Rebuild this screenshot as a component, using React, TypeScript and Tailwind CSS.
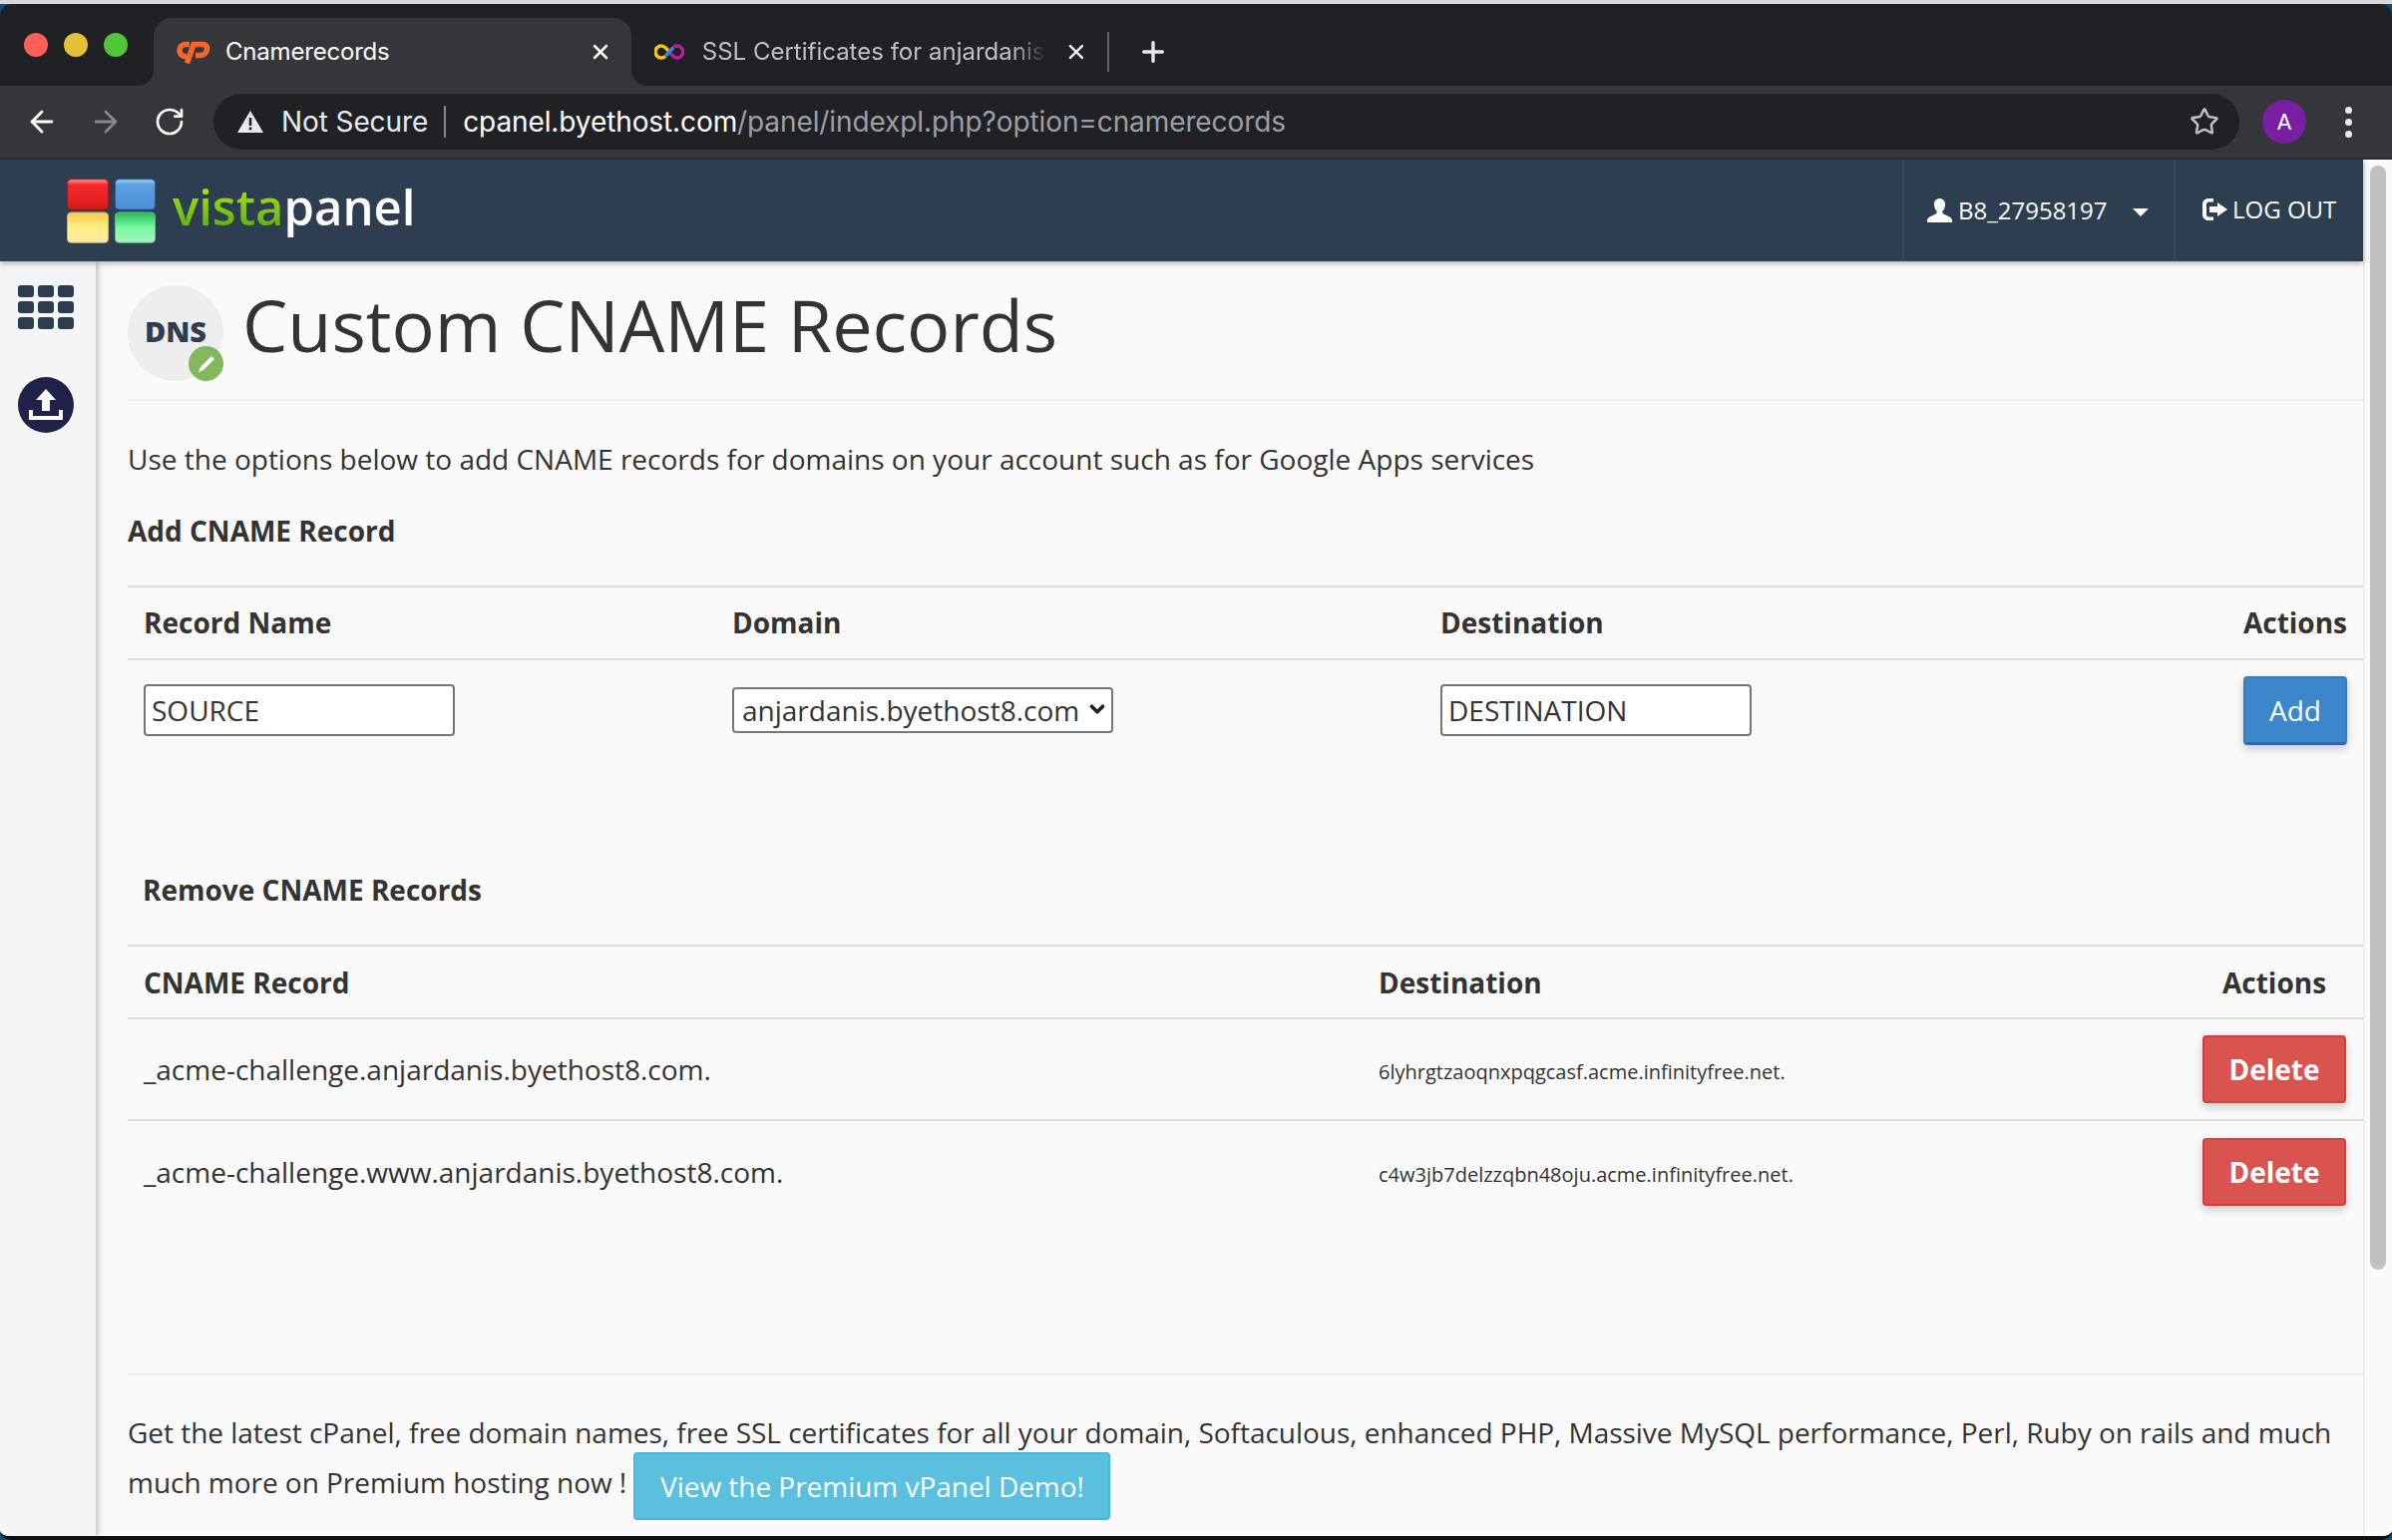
import React from 'react';
import { ArrowLeft, ArrowRight, RotateCw, Star, Plus, X, ChevronDown } from 'lucide-react';

const addColumns = 'grid grid-cols-[606px_710px_1fr_auto]';
const removeColumns = 'grid grid-cols-[1254px_1fr_auto]';

const records = [
  { name: '_acme-challenge.anjardanis.byethost8.com.', destination: '6lyhrgtzaoqnxpqgcasf.acme.infinityfree.net.' },
  { name: '_acme-challenge.www.anjardanis.byethost8.com.', destination: 'c4w3jb7delzzqbn48oju.acme.infinityfree.net.' },
];

const CpanelIcon = () => (
  <svg width="34" height="24" viewBox="0 0 34 24" fill="none" stroke="#f4662a" strokeWidth="5.5">
    <path d="M13 4.500H9C5 4.500 3 7.500 3 10.500S5 16.500 9 16.500H10" />
    <path d="M10.500 23.500L17 4.500H26C29.500 4.500 31 6.500 30.500 9.500C30 13 27.500 15.500 24 15.500H19" />
  </svg>
);

const InfinityIcon = () => (
  <svg width="30" height="20" viewBox="0 0 30 20" fill="none" strokeWidth="3.5">
    <path d="M15 10c-3-4-5-6-8-6a6 6 0 0 0 0 12c1.500 0 3-.6 4-1.500" stroke="#f5c518" />
    <path d="M15 10c3 4 5 6 8 6a6 6 0 0 0 0-12c-1.500 0-3 .6-4 1.500" stroke="#c2189b" />
    <path d="M11 14.500L19 5.500" stroke="#2b8be8" />
  </svg>
);

const WarningIcon = () => (
  <svg width="26" height="22" viewBox="0 0 26 22">
    <path d="M13 0L26 22H0Z" fill="#e8eaed" />
    <rect x="11.700" y="7" width="2.600" height="8" fill="#202124" />
    <rect x="11.700" y="16.500" width="2.600" height="2.800" fill="#202124" />
  </svg>
);

const VistaLogo = () => (
  <svg width="90" height="65" viewBox="0 0 92 66">
    <defs>
      <linearGradient id="logoRed" x1="0" y1="0" x2="0" y2="1">
        <stop offset="0" stopColor="#ff9a9a" />
        <stop offset="0.18" stopColor="#f52a2a" />
        <stop offset="1" stopColor="#d81818" />
      </linearGradient>
      <linearGradient id="logoBlue" x1="0" y1="0" x2="0" y2="1">
        <stop offset="0" stopColor="#a8d0f4" />
        <stop offset="0.18" stopColor="#5d9fe2" />
        <stop offset="1" stopColor="#4a8fd8" />
      </linearGradient>
      <linearGradient id="logoYellow" x1="0" y1="0" x2="0" y2="1">
        <stop offset="0" stopColor="#ffc850" />
        <stop offset="0.5" stopColor="#fff080" />
        <stop offset="1" stopColor="#ffe9a8" />
      </linearGradient>
      <linearGradient id="logoGreen" x1="0" y1="0" x2="0" y2="1">
        <stop offset="0" stopColor="#25b85a" />
        <stop offset="0.5" stopColor="#78fb9e" />
        <stop offset="1" stopColor="#a8f0c0" />
      </linearGradient>
    </defs>
    <rect x="0.500" y="0.500" width="42" height="31" rx="4" fill="url(#logoRed)" stroke="#b01010" />
    <rect x="49.500" y="0.500" width="41" height="31" rx="4" fill="url(#logoBlue)" stroke="#1d5fa8" />
    <rect x="0.500" y="34.500" width="42" height="31" rx="4" fill="url(#logoYellow)" stroke="#c8b070" />
    <rect x="49.500" y="34.500" width="41" height="31" rx="4" fill="url(#logoGreen)" stroke="#5fc080" />
  </svg>
);

const UserIcon = () => (
  <svg width="25" height="24" viewBox="0 0 25 24" fill="#fff">
    <path d="M12.500 0c3.500 0 5.500 2.500 5.500 6 0 3-1.200 5.500-2.800 7 0 1.500.6 2.200 2.300 3l5 2.500c1.500.8 2.500 2 2.500 3.500v2H0v-2c0-1.500 1-2.700 2.500-3.500l5-2.500c1.700-.8 2.300-1.500 2.300-3-1.600-1.500-2.800-4-2.800-7 0-3.500 2-6 5.500-6z" />
  </svg>
);

const LogoutIcon = () => (
  <svg width="25" height="22" viewBox="0 0 25 22" fill="#fff">
    <path d="M11 0v3.500H6.500C5 3.500 4 4.500 4 6v10c0 1.500 1 2.500 2.500 2.500H11V22H6C2.500 22 0 19.500 0 16V6c0-3.500 2.500-6 6-6z" />
    <path d="M15 4l10 7-10 7v-4H7V8h8z" />
  </svg>
);

const GridIcon = () => (
  <div className="grid grid-cols-[16px_16px_16px] auto-rows-[12px] gap-x-[4px] gap-y-[4px]">
    {Array.from({ length: 9 }).map((_, i) => (
      <div key={i} className="rounded-[3px] bg-[#2c3e50]" />
    ))}
  </div>
);

const UploadIcon = () => (
  <svg width="56" height="56" viewBox="0 0 56 56">
    <circle cx="28" cy="28" r="28" fill="#1e2148" />
    <path d="M28 12L38 23H32V34H24V23H18Z" fill="#fff" />
    <path d="M11 33V43H45V33H41V39H15V33Z" fill="#fff" />
  </svg>
);

const TabFlare = ({ side }: { side: 'left' | 'right' }) => (
  <div className={`absolute bottom-0 w-[16px] h-[16px] bg-[#35363a] ${side === 'left' ? 'left-[-16px]' : 'right-[-16px]'}`}>
    <div className={`w-full h-full bg-[#202124] ${side === 'left' ? 'rounded-br-[16px]' : 'rounded-bl-[16px]'}`} />
  </div>
);

const TabStrip = () => (
  <div className="h-[82px] bg-[#202124] flex items-end text-[24px] rounded-t-[12px] shrink-0" style={{ fontFamily: 'Inter, sans-serif' }}>
    <div className="w-[154px] h-[68px] flex items-start pt-[15px] pl-[24px] gap-[16px] shrink-0">
      <div className="w-[24px] h-[24px] rounded-full bg-[#ff5f57]" />
      <div className="w-[24px] h-[24px] rounded-full bg-[#e6c038]" />
      <div className="w-[24px] h-[24px] rounded-full bg-[#53c53c]" />
    </div>
    <div className="relative w-[479px] h-[68px] bg-[#35363a] rounded-t-[18px] flex items-center pl-[23px] pr-[19px] shrink-0">
      <CpanelIcon />
      <span className="ml-[15px] text-white flex-1 tracking-[-0.2px]">Cnamerecords</span>
      <X size={24} strokeWidth={2.5} className="text-white" />
      <TabFlare side="left" />
      <TabFlare side="right" />
    </div>
    <div className="w-[477px] h-[68px] flex items-center pl-[23px] pr-[19px] shrink-0">
      <InfinityIcon />
      <span className="ml-[18px] w-[348px] overflow-hidden whitespace-nowrap text-[#bdc1c6] [mask-image:linear-gradient(to_right,black_90%,transparent)]">SSL Certificates for anjardanis.</span>
      <X size={24} strokeWidth={2.5} className="ml-[18px] text-[#e8eaed]" />
    </div>
    <div className="w-[2px] h-[40px] mb-[14px] bg-[#5f6368] shrink-0" />
    <Plus size={32} strokeWidth={2.5} className="ml-[28px] mb-[18px] text-[#e8eaed]" />
  </div>
);

const Toolbar = () => (
  <div className="h-[74px] bg-[#35363a] flex items-center border-b-[2px] border-[#2a2b2e] shrink-0" style={{ fontFamily: 'Inter, sans-serif' }}>
    <ArrowLeft size={34} strokeWidth={2} className="ml-[25px] text-white shrink-0" />
    <ArrowRight size={34} strokeWidth={2} className="ml-[30px] text-[#85878a] shrink-0" />
    <RotateCw size={32} strokeWidth={2} className="ml-[31px] text-white shrink-0" />
    <div className="ml-[28px] w-[2031px] h-[56px] rounded-full bg-[#202124] flex items-center pl-[24px] pr-[20px] shrink-0">
      <WarningIcon />
      <span className="ml-[18px] text-[28px] tracking-[-0.1px] text-[#e8eaed]">Not Secure</span>
      <div className="ml-[16px] w-[2px] h-[32px] bg-[#85878a]" />
      <span className="ml-[17px] text-[28px] tracking-[-0.1px] text-white whitespace-nowrap">
        cpanel.byethost.com<span className="text-[#9aa0a6]">/panel/indexpl.php?option=cnamerecords</span>
      </span>
      <Star size={30} strokeWidth={2} className="ml-auto text-[#bdc1c6]" />
    </div>
    <div className="ml-[23px] w-[44px] h-[44px] rounded-full bg-[#7b1fa2] flex items-center justify-center text-white text-[22px] shrink-0">A</div>
    <div className="ml-[39px] flex flex-col gap-[5px] shrink-0">
      <div className="w-[7px] h-[7px] rounded-full bg-[#e8eaed]" />
      <div className="w-[7px] h-[7px] rounded-full bg-[#e8eaed]" />
      <div className="w-[7px] h-[7px] rounded-full bg-[#e8eaed]" />
    </div>
  </div>
);

const PanelHeader = () => (
  <div className="h-[102px] bg-[#2c3e50] flex items-center shadow-[0_2px_6px_rgba(0,0,0,0.3)] relative shrink-0">
    <div className="ml-[67px] pt-[1px]">
      <VistaLogo />
    </div>
    <span className="ml-[16px] text-[49px] leading-none font-semibold mb-[8px]">
      <span className="bg-gradient-to-b from-[#c4f01e] to-[#3ea60f] bg-clip-text text-transparent">vista</span>
      <span className="text-white">panel</span>
    </span>
    <div className="ml-auto h-full flex text-white text-[24px]">
      <div className="w-[272px] h-full border-l-[2px] border-[#34495e] flex items-center pl-[23px]">
        <UserIcon />
        <span className="ml-[6px]">B8_27958197</span>
        <div className="ml-[25px] mt-[4px] w-0 h-0 border-l-[8px] border-r-[8px] border-t-[8px] border-l-transparent border-r-transparent border-t-white" />
      </div>
      <div className="w-[190px] h-full border-l-[2px] border-[#34495e] flex items-center pl-[27px] pb-[2px]">
        <LogoutIcon />
        <span className="ml-[5px]">LOG OUT</span>
      </div>
    </div>
  </div>
);

const PageTitle = () => (
  <div className="h-[140px] pt-[24px] border-b-[2px] border-[#eeeeee] flex items-start">
    <div className="relative w-[96px] h-[96px] rounded-full bg-[#eeeeee] flex items-center justify-center">
      <span className="text-[29px] font-extrabold text-[#2c3e50] mb-[4px]">DNS</span>
      <div className="absolute right-0 bottom-0 w-[35px] h-[35px] rounded-full bg-[#84b85f] flex items-center justify-center">
        <svg width="20" height="20" viewBox="0 0 20 20">
          <path d="M15 2l3 3-11 11-5 2 2-5z" fill="#fff" />
        </svg>
      </div>
    </div>
    <h1 className="ml-[19px] text-[72px] leading-[78px] text-[#333333]">Custom CNAME Records</h1>
  </div>
);

const AddForm = () => (
  <div className={`${addColumns} border-t-[2px] border-[#dddddd]`}>
    <div className="h-[73px] px-[16px] pb-[1px] flex items-center font-bold border-b-[2px] border-[#dddddd]">Record Name</div>
    <div className="h-[73px] pb-[1px] flex items-center font-bold border-b-[2px] border-[#dddddd]">Domain</div>
    <div className="h-[73px] pb-[1px] flex items-center font-bold border-b-[2px] border-[#dddddd]">Destination</div>
    <div className="h-[73px] pr-[16px] pb-[1px] flex items-center font-bold border-b-[2px] border-[#dddddd]">Actions</div>
    <div className="h-[103px] pl-[16px] pb-[3px] flex items-center">
      <input
        readOnly
        value="SOURCE"
        className="w-[312px] h-[52px] px-[6px] bg-white border-[2px] border-[#767676] rounded-[4px] text-[#333333]"
      />
    </div>
    <div className="h-[103px] pb-[3px] flex items-center">
      <div className="relative w-[382px] h-[46px]">
        <select className="w-full h-full pl-[8px] pr-[30px] bg-white border-[2px] border-[#767676] rounded-[4px] text-[#333333] appearance-none">
          <option>anjardanis.byethost8.com</option>
        </select>
        <ChevronDown size={22} strokeWidth={4} className="absolute right-[5px] top-[11px] text-[#222222] pointer-events-none" />
      </div>
    </div>
    <div className="h-[103px] pb-[3px] flex items-center">
      <input
        readOnly
        value="DESTINATION"
        className="w-[312px] h-[52px] px-[6px] bg-white border-[2px] border-[#767676] rounded-[4px] text-[#333333]"
      />
    </div>
    <div className="h-[103px] pr-[16px] pb-[2px] flex items-center">
      <button className="w-[104px] h-[69px] rounded-[4px] bg-[#3c87cc] border-[2px] border-[#357ebd] border-b-[3px] border-b-[#2e6da4] text-white shadow-[0_4px_10px_rgba(0,0,0,0.2)]">Add</button>
    </div>
  </div>
);

const RemoveTable = () => (
  <div className={`${removeColumns} border-t-[2px] border-[#dddddd]`}>
    <div className="h-[73px] px-[16px] flex items-center font-bold border-b-[2px] border-[#dddddd]">CNAME Record</div>
    <div className="h-[73px] flex items-center font-bold border-b-[2px] border-[#dddddd]">Destination</div>
    <div className="h-[73px] w-[161px] pl-[20px] flex items-center font-bold border-b-[2px] border-[#dddddd]">Actions</div>
    {records.map((r, i) => {
      const rowLine = i === 0 ? 'border-b-[2px] border-[#dddddd]' : '';
      return (
        <React.Fragment key={r.name}>
          <div className={`h-[102px] pl-[16px] flex items-center ${rowLine}`}>{r.name}</div>
          <div className={`h-[102px] pt-[6px] flex items-center text-[20px] ${rowLine}`}>{r.destination}</div>
          <div className={`h-[102px] flex items-center justify-start ${rowLine}`}>
            <button className="w-[144px] h-[68px] rounded-[4px] bg-[#d9534f] border-[2px] border-[#d43f3a] text-white font-bold shadow-[0_4px_10px_rgba(0,0,0,0.2)]">Delete</button>
          </div>
        </React.Fragment>
      );
    })}
  </div>
);

export default function App() {
  return (
    <div className="w-[2398px] h-[1544px] overflow-hidden flex flex-col bg-[#0f4c75]">
      <div className="h-[4px] bg-[#d8d8d8] shrink-0" />
      <TabStrip />
      <Toolbar />
      <div className="flex-1 min-h-0 flex bg-[#fafafa] rounded-b-[10px] overflow-hidden border-b-[4px] border-[#111111]" style={{ fontFamily: '"Open Sans", sans-serif' }}>
        <div className="flex-1 min-w-0 flex flex-col">
          <PanelHeader />
          <div className="flex-1 min-h-0 flex">
            <div className="w-[96px] shrink-0 bg-[#f5f5f5] shadow-[2px_0_6px_rgba(0,0,0,0.25)] flex flex-col items-start pl-[18px] pt-[24px]">
              <GridIcon />
              <div className="mt-[48px]">
                <UploadIcon />
              </div>
            </div>
            <div className="flex-1 min-w-0 pl-[32px] text-[28px] text-[#333333]">
              <PageTitle />
              <p className="mt-[38px] leading-[40px]">Use the options below to add CNAME records for domains on your account such as for Google Apps services</p>
              <p className="mt-[32px] leading-[40px] font-bold">Add CNAME Record</p>
              <div className="mt-[35px]">
                <AddForm />
              </div>
              <p className="mt-[107px] pl-[15px] leading-[40px] font-bold">Remove CNAME Records</p>
              <div className="mt-[35px]">
                <RemoveTable />
              </div>
              <div className="mt-[151px] border-t-[2px] border-[#eeeeee] pt-[32px] pr-[16px] leading-[50px] tracking-[-0.03px]">
                Get the latest cPanel, free domain names, free SSL certificates for all your domain, Softaculous, enhanced PHP, Massive MySQL performance, Perl, Ruby on rails and much much more on Premium hosting now !{' '}
                <button className="w-[478px] h-[68px] my-[-10px] rounded-[4px] bg-[#5bc0de] border-[2px] border-[#46b8da] text-white align-middle">View the Premium vPanel Demo!</button>
              </div>
            </div>
          </div>
        </div>
        <div className="w-[29px] shrink-0 bg-[#fafafa] border-l-[2px] border-[#eeeeee] pl-[5px] pt-[6px]">
          <div className="w-[16px] h-[1107px] rounded-full bg-[#c1c1c1]" />
        </div>
      </div>
    </div>
  );
}
